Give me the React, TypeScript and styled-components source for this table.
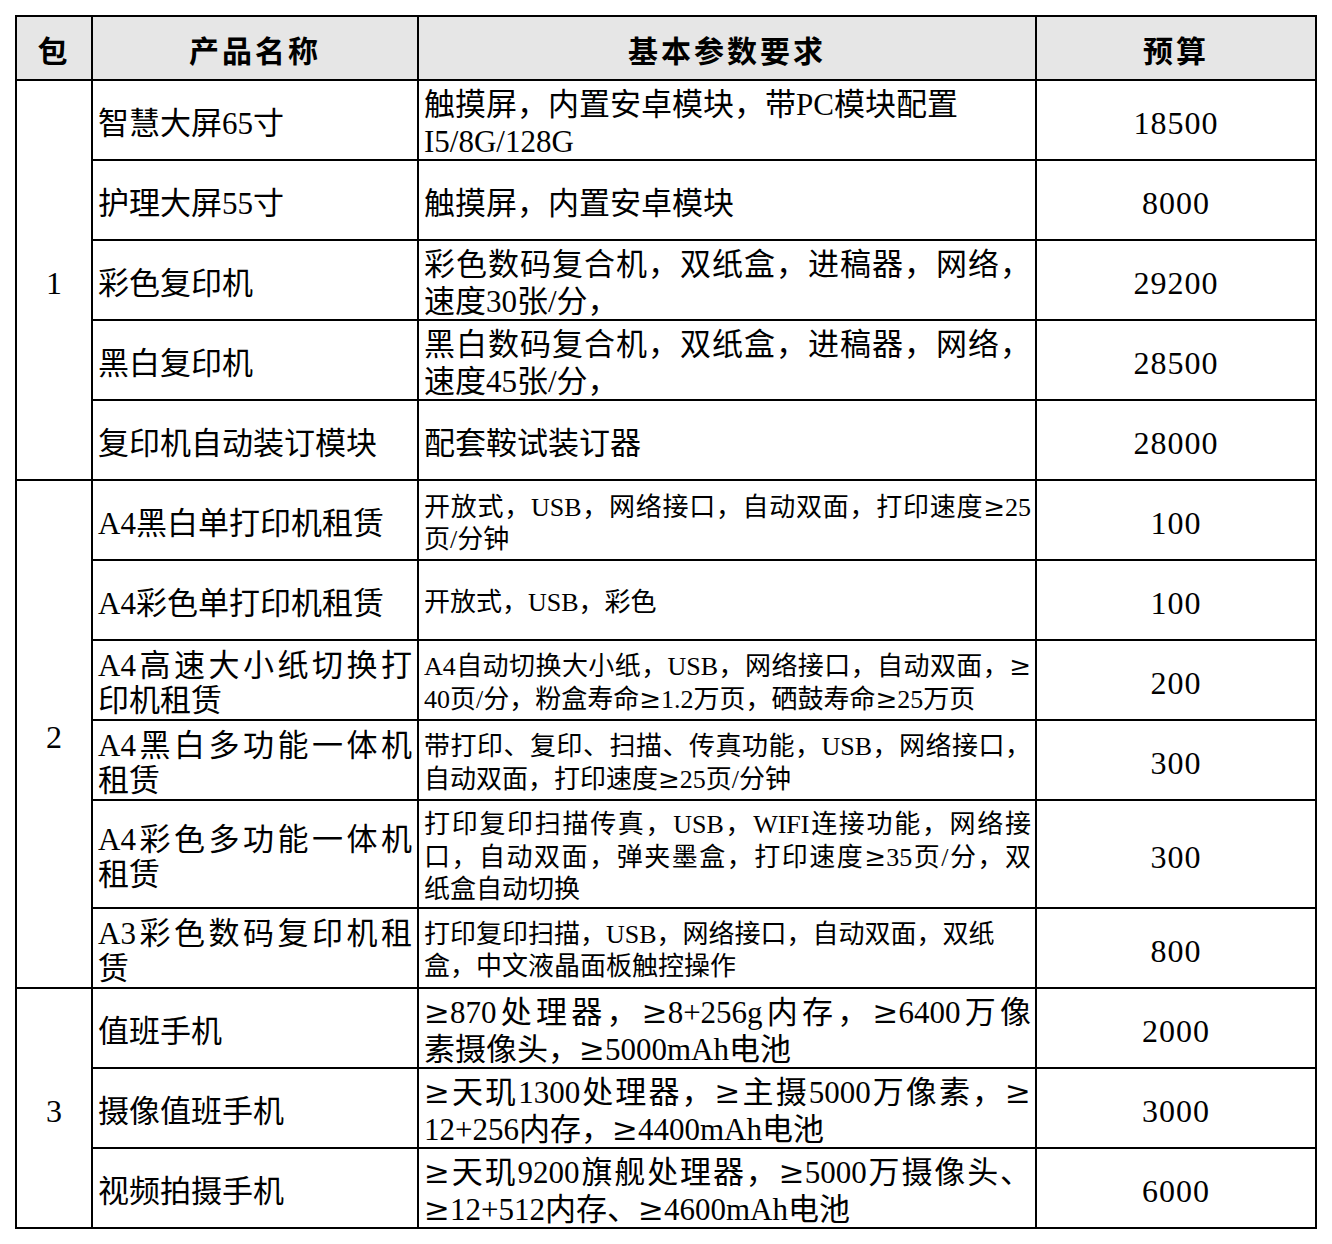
import React from "react";
import styled, { createGlobalStyle } from "styled-components";

const GlobalStyle = createGlobalStyle`
  html, body { margin: 0; padding: 0; background: #ffffff; }
  * { box-sizing: border-box; }
`;

const Page = styled.div`
  padding: 15px;
  min-height: 1244px;
  background: #ffffff;
  font-family: "Liberation Serif", "Noto Sans CJK SC", serif;
  color: #000000;
`;

const Grid = styled.div`
  display: grid;
  width: 1302px;
  grid-template-columns: 76px 326px 618px 280px;
  grid-template-rows: 64px repeat(9, 80px) 108px repeat(4, 80px);
  border-top: 2px solid #000;
  border-left: 2px solid #000;
`;

const Cell = styled.div`
  display: flex;
  align-items: center;
  border-right: 2px solid #000;
  border-bottom: 2px solid #000;
  min-width: 0;
  overflow: hidden;
`;

const HeadCell = styled(Cell)`
  justify-content: center;
  background: #e6e6e6;
  font-weight: 700;
  font-size: 30px;
  letter-spacing: 3px;
  padding-top: 1px;
`;

const BodyCell = styled(Cell)`
  padding-top: 6px;
`;

const PkgCell = styled(BodyCell)<{ $span: number }>`
  grid-row: span ${(p) => p.$span};
  justify-content: center;
  font-size: 32px;
`;

const NameCell = styled(BodyCell)`
  padding-left: 5px;
  padding-right: 5px;
  font-size: 31px;
  line-height: 35px;
`;

const DescCell = styled(BodyCell)<{ $small?: boolean }>`
  padding-left: 5px;
  padding-right: 4px;
  font-size: ${(p) => (p.$small ? "26px" : "31px")};
  line-height: ${(p) => (p.$small ? "32px" : "37px")};
`;

const PriceCell = styled(BodyCell)`
  justify-content: center;
  font-size: 32px;
  letter-spacing: 1px;
`;

const Lines = styled.div`
  width: 100%;
`;

const Line = styled.span<{ $justify?: boolean }>`
  display: block;
  white-space: nowrap;
  text-align: left;
  text-align-last: ${(p) => (p.$justify ? "justify" : "left")};
`;

const Sym = styled.span`
  font-family: "DejaVu Serif", serif;
`;

type Item = {
  name: string[];
  desc: string[];
  small?: boolean;
  noJustify?: boolean;
  price: string;
};

type Group = { pkg: string; items: Item[] };

const groups: Group[] = [
  {
    pkg: "1",
    items: [
      {
        name: ["智慧大屏65寸"],
        desc: ["触摸屏，内置安卓模块，带PC模块配置", "I5/8G/128G"],
        noJustify: true,
        price: "18500",
      },
      { name: ["护理大屏55寸"], desc: ["触摸屏，内置安卓模块"], price: "8000" },
      {
        name: ["彩色复印机"],
        desc: ["彩色数码复合机，双纸盒，进稿器，网络，", "速度30张/分，"],
        price: "29200",
      },
      {
        name: ["黑白复印机"],
        desc: ["黑白数码复合机，双纸盒，进稿器，网络，", "速度45张/分，"],
        price: "28500",
      },
      { name: ["复印机自动装订模块"], desc: ["配套鞍试装订器"], price: "28000" },
    ],
  },
  {
    pkg: "2",
    items: [
      {
        name: ["A4黑白单打印机租赁"],
        desc: ["开放式，USB，网络接口，自动双面，打印速度≥25", "页/分钟"],
        small: true,
        price: "100",
      },
      {
        name: ["A4彩色单打印机租赁"],
        desc: ["开放式，USB，彩色"],
        small: true,
        price: "100",
      },
      {
        name: ["A4高速大小纸切换打", "印机租赁"],
        desc: [
          "A4自动切换大小纸，USB，网络接口，自动双面，≥",
          "40页/分，粉盒寿命≥1.2万页，硒鼓寿命≥25万页",
        ],
        small: true,
        price: "200",
      },
      {
        name: ["A4黑白多功能一体机", "租赁"],
        desc: ["带打印、复印、扫描、传真功能，USB，网络接口，", "自动双面，打印速度≥25页/分钟"],
        small: true,
        price: "300",
      },
      {
        name: ["A4彩色多功能一体机", "租赁"],
        desc: [
          "打印复印扫描传真，USB，WIFI连接功能，网络接",
          "口，自动双面，弹夹墨盒，打印速度≥35页/分，双",
          "纸盒自动切换",
        ],
        small: true,
        price: "300",
      },
      {
        name: ["A3彩色数码复印机租", "赁"],
        desc: ["打印复印扫描，USB，网络接口，自动双面，双纸", "盒，中文液晶面板触控操作"],
        small: true,
        noJustify: true,
        price: "800",
      },
    ],
  },
  {
    pkg: "3",
    items: [
      {
        name: ["值班手机"],
        desc: ["≥870处理器，≥8+256g内存，≥6400万像", "素摄像头，≥5000mAh电池"],
        price: "2000",
      },
      {
        name: ["摄像值班手机"],
        desc: ["≥天玑1300处理器，≥主摄5000万像素，≥", "12+256内存，≥4400mAh电池"],
        price: "3000",
      },
      {
        name: ["视频拍摄手机"],
        desc: ["≥天玑9200旗舰处理器，≥5000万摄像头、", "≥12+512内存、≥4600mAh电池"],
        price: "6000",
      },
    ],
  },
];

const withSymbols = (text: string) =>
  text.split(/(≥)/).map((part, i) =>
    part === "≥" ? <Sym key={i}>≥</Sym> : <React.Fragment key={i}>{part}</React.Fragment>
  );

const TextLines: React.FC<{ lines: string[]; justify: boolean }> = ({ lines, justify }) => (
  <Lines>
    {lines.map((l, i) => (
      <Line key={i} $justify={justify && i < lines.length - 1}>
        {withSymbols(l)}
      </Line>
    ))}
  </Lines>
);

export default function App() {
  return (
    <>
      <GlobalStyle />
      <Page>
        <Grid>
          <HeadCell>包</HeadCell>
          <HeadCell>产品名称</HeadCell>
          <HeadCell>基本参数要求</HeadCell>
          <HeadCell>预算</HeadCell>
          {groups.map((g) => (
            <React.Fragment key={g.pkg}>
              {g.items.map((it, idx) => (
                <React.Fragment key={idx}>
                  {idx === 0 && <PkgCell $span={g.items.length}>{g.pkg}</PkgCell>}
                  <NameCell>
                    <TextLines lines={it.name} justify={true} />
                  </NameCell>
                  <DescCell $small={it.small}>
                    <TextLines lines={it.desc} justify={!it.noJustify} />
                  </DescCell>
                  <PriceCell>{it.price}</PriceCell>
                </React.Fragment>
              ))}
            </React.Fragment>
          ))}
        </Grid>
      </Page>
    </>
  );
}
